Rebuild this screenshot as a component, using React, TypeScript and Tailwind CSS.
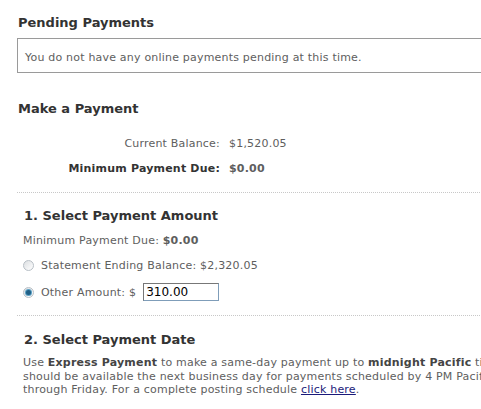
import React from "react";

const font = { fontFamily: '"DejaVu Sans", Verdana, sans-serif' };

function Radio({ checked }: { checked?: boolean }) {
  return (
    <span className="relative inline-flex h-[11px] w-[11px] shrink-0 items-center justify-center rounded-full border border-[#b8bfc6] bg-gradient-to-br from-[#dcdfe2] to-[#ffffff]">
      {checked && (
        <span className="h-[5px] w-[5px] rounded-full bg-[#1f5f86] shadow-[0_0_0_1px_#5aa0c4]" />
      )}
    </span>
  );
}

export default function App() {
  return (
    <div className="w-[481px] h-[409px] overflow-hidden bg-white" style={font}>
      <div className="w-[620px] pl-[17px] pt-[15px] text-[11px] leading-[13px] tracking-[0.2px] text-[#5e5e5e]">
        <h2 className="pl-[1px] text-[13px] leading-[16px] font-bold tracking-normal text-[#333]">Pending Payments</h2>
        <div className="mt-[7px] h-[35px] border border-[#9a9a9a] pl-[7px] pt-[12px]">
          You do not have any online payments pending at this time.
        </div>

        <h2 className="mt-[28px] pl-[1px] text-[13px] leading-[16px] font-bold tracking-normal text-[#333]">Make a Payment</h2>

        <div className="mt-[20px] grid grid-cols-[203px_auto] gap-x-[9px] gap-y-[12px]">
          <div className="text-right">Current Balance:</div>
          <div>$1,520.05</div>
          <div className="text-right font-bold text-[#333]">Minimum Payment Due:</div>
          <div className="font-bold">$0.00</div>
        </div>

        <div className="mt-[17px] border-t border-dotted border-[#c8c8c8]" />

        <div className="pl-[6px]">
          <h3 className="mt-[15px] pl-[1px] text-[13px] leading-[16px] font-bold tracking-normal text-[#333]">1. Select Payment Amount</h3>
          <div className="mt-[10px]">
            Minimum Payment Due: <span className="font-bold">$0.00</span>
          </div>
          <div className="mt-[12px] flex items-center gap-[7px]">
            <Radio />
            <span>Statement Ending Balance: $2,320.05</span>
          </div>
          <div className="mt-[11px] flex items-center gap-[7px]">
            <Radio checked />
            <span>Other Amount: $</span>
            <span className="inline-flex h-[18px] w-[76px] items-center border border-[#7f9db9] border-t-[#777] border-l-[#777] pl-[2px] text-[12px] tracking-normal text-black">
              310.00
            </span>
          </div>
        </div>

        <div className="mt-[14px] border-t border-dotted border-[#c8c8c8]" />

        <div className="pl-[6px]">
          <h3 className="mt-[16px] pl-[1px] text-[13px] leading-[16px] font-bold tracking-normal text-[#333]">2. Select Payment Date</h3>
          <p className="mt-[8px] whitespace-nowrap leading-[13.5px]">
            Use <b className="text-[#444]">Express Payment</b> to make a same-day payment up to <b className="text-[#444]">midnight Pacific</b> time. Payments
            <br />
            should be available the next business day for payments scheduled by 4 PM Pacific time, Monday
            <br />
            through Friday. For a complete posting schedule{" "}
            <a href="#" className="text-[#1a1a7a] underline">click here</a>.
          </p>
        </div>
      </div>
    </div>
  );
}
